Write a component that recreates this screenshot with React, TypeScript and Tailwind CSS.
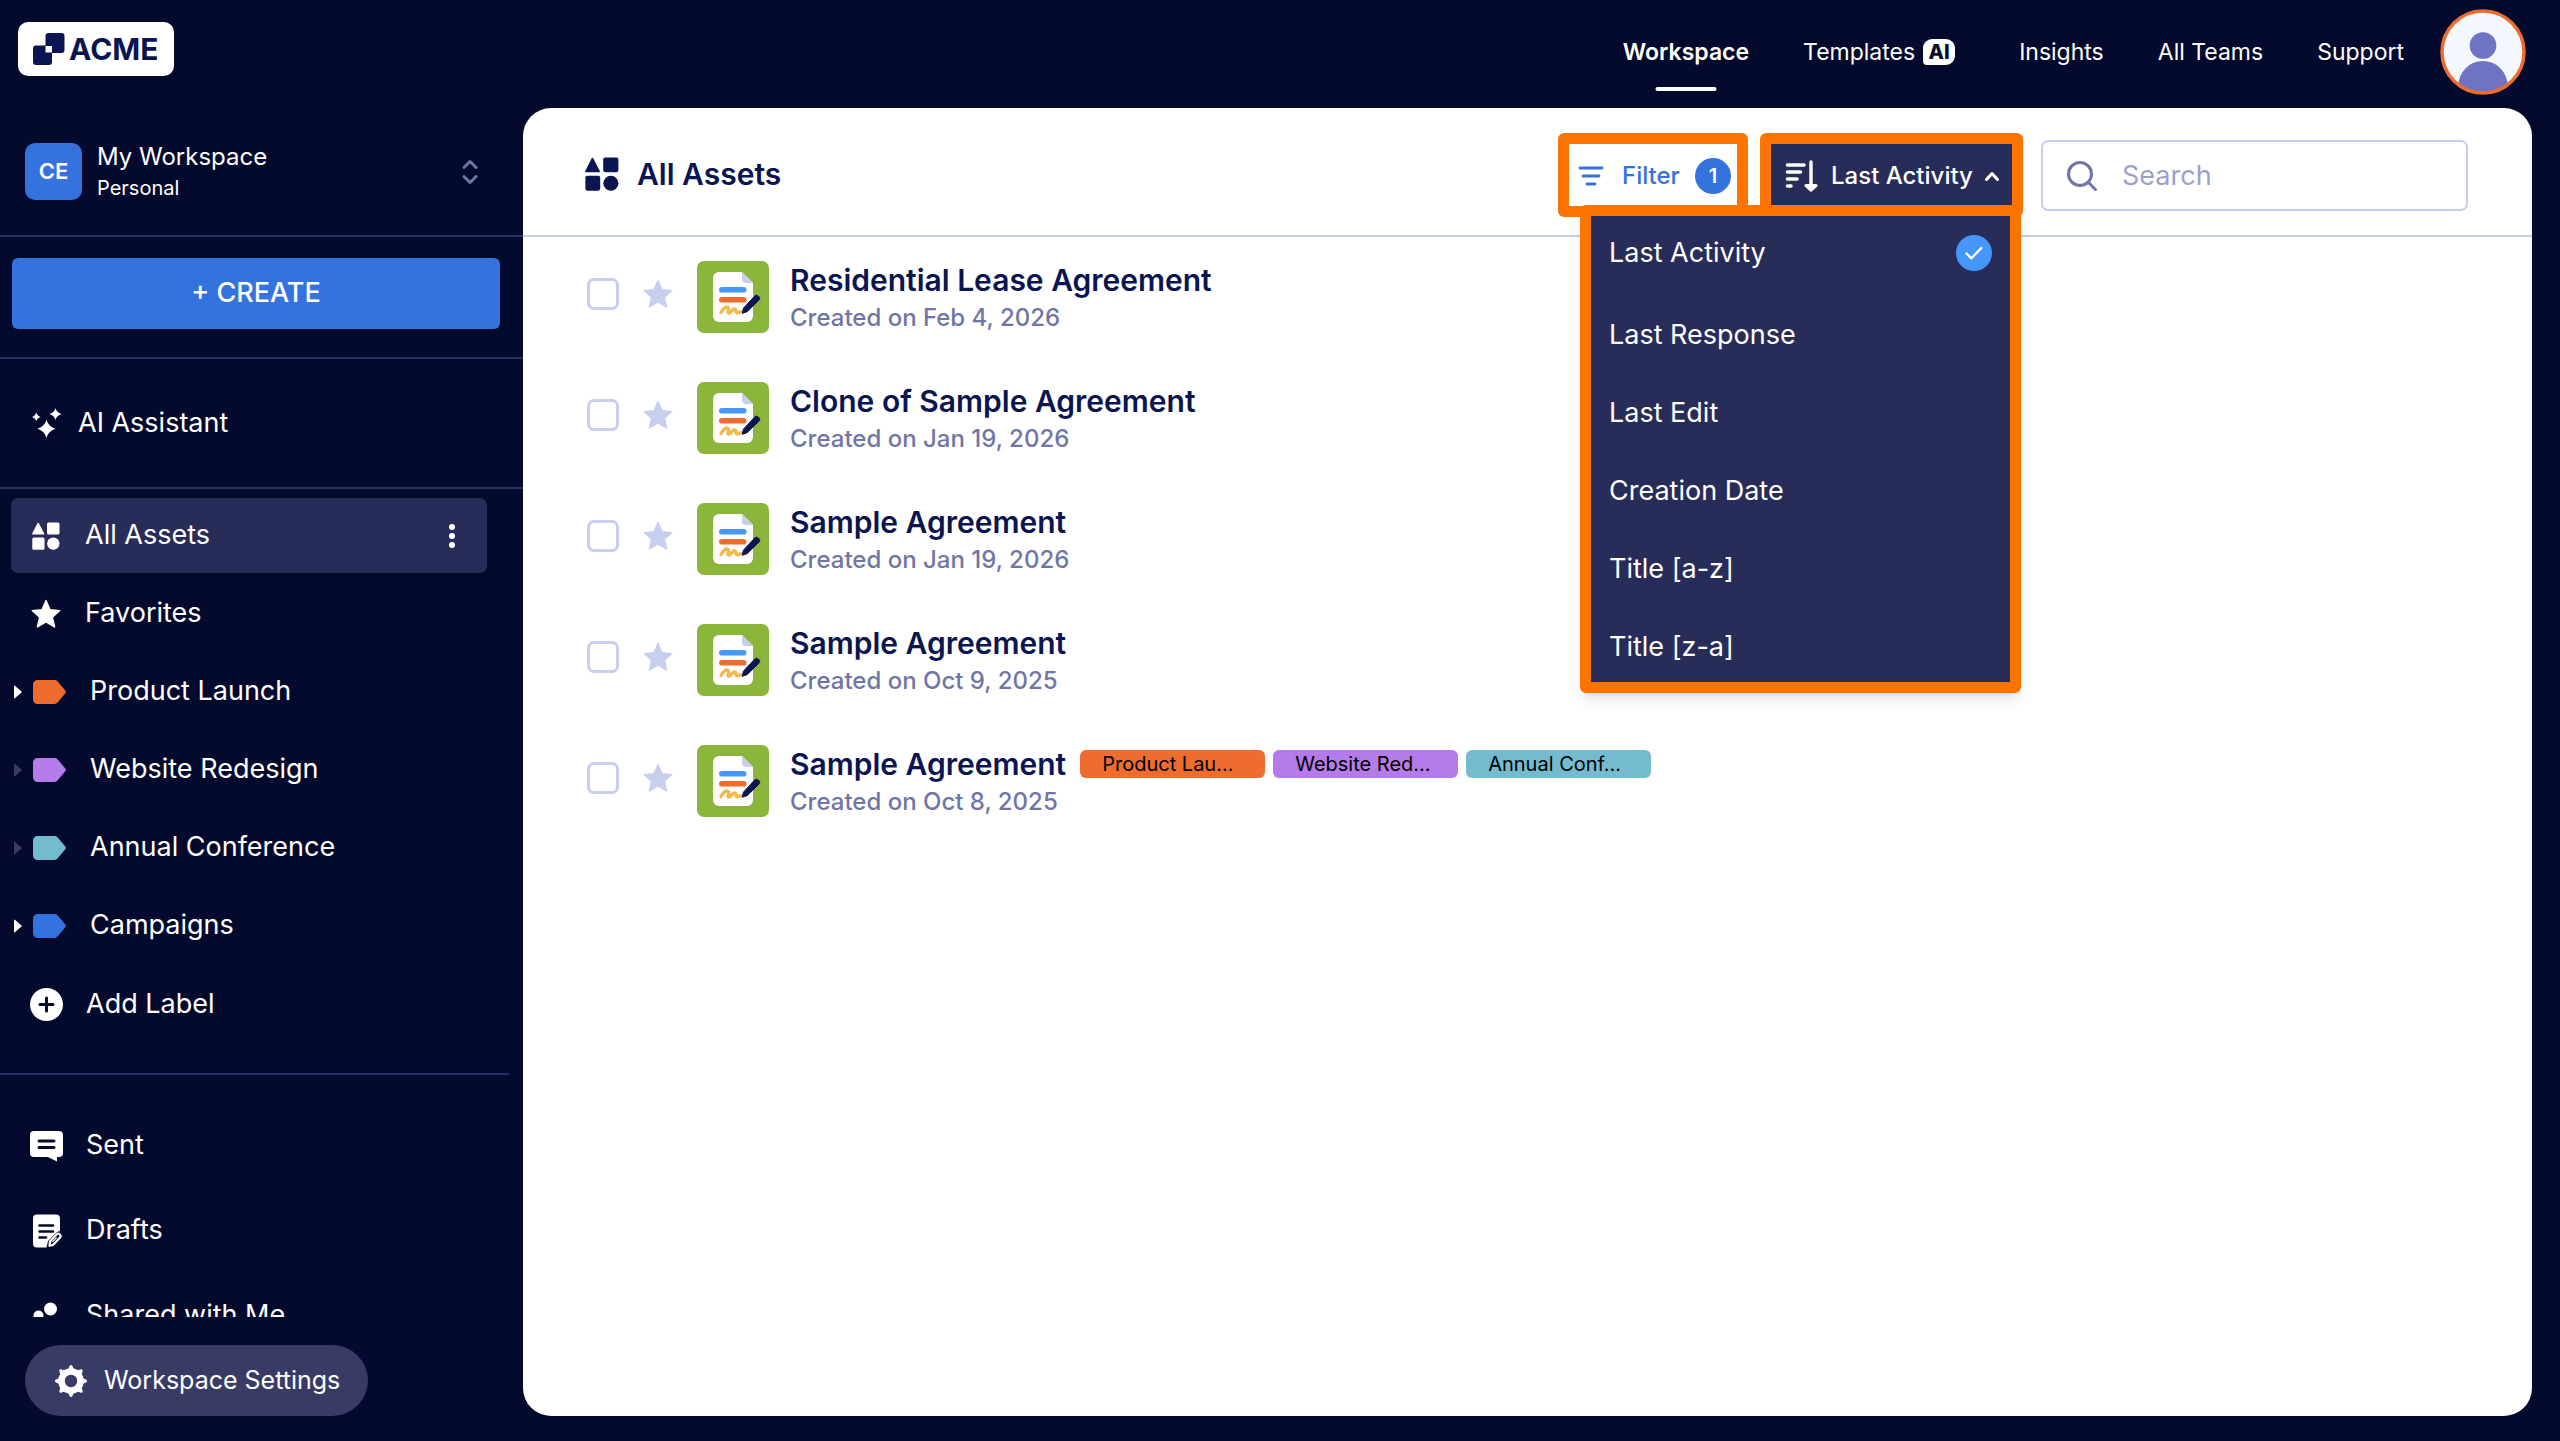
import React from 'react';
import clsx from 'clsx';

const labels = [
  { name: 'Product Launch', color: '#ee6d2e', expandable: true },
  { name: 'Website Redesign', color: '#b57beb', expandable: false },
  { name: 'Annual Conference', color: '#74bbcf', expandable: false },
  { name: 'Campaigns', color: '#3473dd', expandable: true },
];

const sortOptions = [
  'Last Activity',
  'Last Response',
  'Last Edit',
  'Creation Date',
  'Title [a-z]',
  'Title [z-a]',
];

const assets = [
  { title: 'Residential Lease Agreement', date: 'Created on Feb 4, 2026', tags: [] },
  { title: 'Clone of Sample Agreement', date: 'Created on Jan 19, 2026', tags: [] },
  { title: 'Sample Agreement', date: 'Created on Jan 19, 2026', tags: [] },
  { title: 'Sample Agreement', date: 'Created on Oct 9, 2025', tags: [] },
  {
    title: 'Sample Agreement',
    date: 'Created on Oct 8, 2025',
    tags: [
      { text: 'Product Lau...', bg: 'bg-[#ee6d2e]' },
      { text: 'Website Red...', bg: 'bg-[#b57beb]' },
      { text: 'Annual Conf...', bg: 'bg-[#74bbcf]' },
    ],
  },
];

/* Icons */

const ShapesIcon = ({ className }: { className?: string }) => (
  <svg viewBox="0 0 28 28" fill="currentColor" className={className} aria-hidden="true">
    <path d="M5.4 1.2a.8.8 0 0 1 1.5 0l5.3 10.3c.3.6-.1 1-.7 1H.9c-.7 0-1-.5-.7-1z" />
    <rect x="15" y="0.5" width="12.5" height="12" rx="1.5" />
    <rect x="0.3" y="15.5" width="12.2" height="12.2" rx="1.5" />
    <circle cx="21.3" cy="21.6" r="6.2" />
  </svg>
);

const StarIcon = ({ className }: { className?: string }) => (
  <svg viewBox="0 0 30 30" fill="currentColor" className={className} aria-hidden="true">
    <path
      d="M15 1.5l4 9.2 9.8.9-7.4 6.6 2.2 9.8-8.6-5-8.6 5 2.2-9.8-7.4-6.6 9.8-.9z"
      stroke="currentColor"
      strokeWidth="1.4"
      strokeLinejoin="round"
    />
  </svg>
);

const SparklesIcon = () => (
  <svg viewBox="0 0 30 30" fill="currentColor" className="h-[30px] w-[30px]" aria-hidden="true">
    <path d="M14.5 11.5c1.3 4.8 4 7.5 9 9.3c-5 1.8-7.7 4.5-9 9.3c-1.3-4.8-4-7.5-9-9.3c5-1.8 7.7-4.5 9-9.3z" />
    <path d="M23.5 0c.9 3.2 2.7 4.9 6 6c-3.3 1.1-5.1 2.8-6 6c-.9-3.2-2.7-4.9-6-6c3.3-1.1 5.1-2.8 6-6z" />
    <path d="M4.3 4.5c.7 2.4 2 3.6 4.3 4.4c-2.3.8-3.6 2-4.3 4.4c-.7-2.4-2-3.6-4.3-4.4c2.3-.8 3.6-2 4.3-4.4z" />
  </svg>
);

const LabelIcon = ({ color }: { color: string }) => (
  <svg viewBox="0 0 33 24" className="h-6 w-[33px]" fill={color} aria-hidden="true">
    <path d="M5 0h16.5c1.2 0 2.2.5 3 1.3l7.6 9c.9 1 .9 2.3 0 3.3l-7.6 9c-.8.9-1.8 1.4-3 1.4H5c-3 0-5-2-5-5V5c0-3 2-5 5-5z" />
  </svg>
);

const PlusCircleIcon = () => (
  <svg viewBox="0 0 33 33" className="h-[33px] w-[33px]" aria-hidden="true">
    <circle cx="16.5" cy="16.5" r="16.5" fill="#fff" />
    <path d="M16.5 10v13M10 16.5h13" stroke="#040a2d" strokeWidth="3" strokeLinecap="round" />
  </svg>
);

const SentIcon = () => (
  <svg viewBox="0 0 33 32" className="h-8 w-[33px]" aria-hidden="true">
    <path d="M4 1h25a4 4 0 0 1 4 4v18a4 4 0 0 1-4 4h-2v4.5L18 27H4a4 4 0 0 1-4-4V5a4 4 0 0 1 4-4z" fill="#fff" />
    <path d="M9 11h15M9 17.5h15" stroke="#040a2d" strokeWidth="3" strokeLinecap="round" />
  </svg>
);

const DraftIcon = () => (
  <svg viewBox="0 0 30 34" className="h-[34px] w-[30px]" aria-hidden="true">
    <path d="M4 .5h19a4 4 0 0 1 4 4V17l-3 1-9 9-1.5 6.500H4a4 4 0 0 1-4-4v-25a4 4 0 0 1 4-4z" fill="#fff" />
    <path d="M6.500 11.500H20M6.500 17.500H20M6.500 23.500H13" stroke="#040a2d" strokeWidth="2.6" strokeLinecap="round" />
    <path d="M17 27.500l6.500-7a2.300 2.300 0 0 1 3.300 3.300L20 31l-3.500.8z" fill="#040a2d" stroke="#fff" strokeWidth="2.200" strokeLinejoin="round" />
    <path d="M19.700 27.700l3.600-3.900" stroke="#fff" strokeWidth="1.200" strokeLinecap="round" />
  </svg>
);

const PeopleIcon = () => (
  <svg viewBox="0 0 33 32" className="h-8 w-[33px]" fill="#fff" aria-hidden="true">
    <circle cx="20.5" cy="9" r="6.5" />
    <circle cx="8.5" cy="15.5" r="5" />
    <path d="M9 31c0-8 4-13 11.5-13S32 23 32 31z" />
  </svg>
);

const GearIcon = () => (
  <svg viewBox="0 0 34 34" className="h-[34px] w-[34px]" aria-hidden="true">
    <g fill="#fff">
      <circle cx="17" cy="17" r="12.8" />
      {[0, 45, 90, 135, 180, 225, 270, 315].map((angle) => (
        <path key={angle} d="M12 6.5c2.5-1 3-3 3.5-4.5q1.5-2.2 3 0c.5 1.5 1 3.5 3.5 4.5z" transform={`rotate(${angle} 17 17)`} />
      ))}
    </g>
    <circle cx="17" cy="17" r="6.2" fill="#383b66" />
  </svg>
);

const SortIcon = () => (
  <svg viewBox="0 0 34 34" className="h-[34px] w-[34px]" fill="none" stroke="#fff" strokeLinecap="round" aria-hidden="true">
    <path d="M2.5 6h16.5M2.5 13h13M2.5 20h9.5M2.5 27h3.5" strokeWidth="3.6" />
    <path d="M26 3v24" strokeWidth="3.4" />
    <path d="M21 26.5h10L26 31z" fill="#fff" strokeWidth="3.2" strokeLinejoin="round" />
  </svg>
);

const FilterIcon = () => (
  <svg viewBox="0 0 26 22" className="h-[22px] w-[26px]" fill="none" stroke="currentColor" strokeWidth="2.8" strokeLinecap="round" aria-hidden="true">
    <path d="M2 3h22M5 11h16M9 19h8" />
  </svg>
);

const SearchIcon = () => (
  <svg viewBox="0 0 32 32" className="h-8 w-8 shrink-0" fill="none" stroke="#6f76a7" strokeWidth="3" strokeLinecap="round" aria-hidden="true">
    <circle cx="14" cy="14" r="11.5" />
    <path d="M22.5 22.5l7 7" />
  </svg>
);

const SignDocumentIcon = () => (
  <svg viewBox="0 0 72 72" className="h-[72px] w-[72px] shrink-0" aria-hidden="true">
    <rect width="72" height="72" rx="7" fill="#8bb63b" />
    <path d="M22 11h23l11 11v33a6 6 0 0 1-6 6H22a6 6 0 0 1-6-6V17a6 6 0 0 1 6-6z" fill="#fff" />
    <path d="M45 11l11 11h-7a4 4 0 0 1-4-4z" fill="#c8ceed" />
    <rect x="22" y="26" width="27.5" height="5.6" rx="2.8" fill="#4598fa" />
    <rect x="22" y="36" width="27.5" height="5.6" rx="2.8" fill="#ee6d2e" />
    <path d="M24 51.5c2-3.5 5-6.5 7-5s-1.5 6 1 5.5 4-5 6-4 0 4 2.5 3.8 2-1.6 5-.8" fill="none" stroke="#f5b94a" strokeWidth="3.4" strokeLinecap="round" strokeLinejoin="round" />
    <path d="M57.5 35.2q2-2 3.8-.2l.6.6q1.8 1.8 0 3.6L50 50.7l-4.6 1.5 1-5z" fill="#0a1551" stroke="#0a1551" strokeWidth="1" strokeLinejoin="round" />
  </svg>
);

const Avatar = () => (
  <svg viewBox="0 0 86 86" className="h-[86px] w-[86px]" aria-hidden="true">
    <clipPath id="avatar-clip">
      <circle cx="43" cy="43" r="40" />
    </clipPath>
    <circle cx="43" cy="43" r="41" fill="#f5f7ff" />
    <g clipPath="url(#avatar-clip)" fill="#6f73c4">
      <circle cx="43" cy="36.5" r="13.3" />
      <circle cx="43" cy="76.5" r="24.5" />
    </g>
    <circle cx="43" cy="43" r="41" fill="none" stroke="#ee6d2e" strokeWidth="3.5" />
  </svg>
);

/* Layout pieces */

const TopBar = () => (
  <header className="flex h-[108px] shrink-0 items-start justify-between pr-[34px] pl-[18px]">
    <a href="#" className="mt-[22px] flex h-[54px] items-center gap-1 rounded-[10px] bg-white px-[15px] text-[#0a1551]">
      <svg viewBox="0 0 32 32" className="h-8 w-8" aria-hidden="true">
        <rect x="12.5" width="19" height="20" rx="3" fill="#0a1551" />
        <rect y="12.5" width="19" height="19.5" rx="3" fill="#0a1551" />
        <rect x="12.5" y="13" width="6.5" height="6.5" fill="#fff" />
      </svg>
      <span className="text-[30px] leading-none font-bold">ACME</span>
    </a>

    <nav className="flex h-[104px] items-center gap-[54px] text-[23px]">
      <a href="#" className="relative font-semibold">
        Workspace
        <span className="absolute -bottom-[22px] left-1/2 h-1 w-[61px] -translate-x-1/2 rounded-full bg-white" />
      </a>
      <a href="#" className="flex items-center gap-2 pr-[10px]">
        Templates
        <span className="flex h-[26px] w-8 items-center justify-center rounded-[9px] rounded-bl-[4px] bg-white text-xl leading-none font-extrabold text-[#040a2d]">
          AI
        </span>
      </a>
      <a href="#">Insights</a>
      <a href="#">All Teams</a>
      <a href="#">Support</a>
      <button type="button" aria-label="Account" className="-ml-[18px]">
        <Avatar />
      </button>
    </nav>
  </header>
);

const Sidebar = () => (
  <aside className="flex w-[523px] shrink-0 flex-col">
    <button type="button" className="flex h-[129px] shrink-0 items-center border-b-2 border-[#2b2f60] pr-[45px] pl-[25px] text-left">
      <span className="flex h-[57px] w-[57px] items-center justify-center rounded-[10px] bg-[#3473dd] text-[22px] font-semibold">CE</span>
      <span className="ml-[15px] flex-1">
        <span className="block text-2xl leading-8">My Workspace</span>
        <span className="block text-xl leading-[30px]">Personal</span>
      </span>
      <svg viewBox="0 0 16 26" className="h-[26px] w-4" fill="none" stroke="#6f76a7" strokeWidth="3" strokeLinecap="round" strokeLinejoin="round" aria-hidden="true">
        <path d="M2 8.5l6-6 6 6M2 17.5l6 6 6-6" />
      </svg>
    </button>

    <div className="shrink-0 border-b-2 border-[#2b2f60] pt-[21px] pr-[23px] pb-7 pl-3">
      <button type="button" className="h-[71px] w-full rounded-md bg-[#3473dd] text-[27px] font-medium">
        + CREATE
      </button>
    </div>

    <a href="#" className="flex h-[130px] shrink-0 items-center gap-4 border-b-2 border-[#2b2f60] pl-8 text-[27px]">
      <SparklesIcon />
      AI Assistant
    </a>

    <div className="min-h-0 flex-1 overflow-hidden text-[27px]">
      <ul className="mr-[14px] flex flex-col gap-[3px] border-b-2 border-[#2b2f60] pt-[9px] pb-[30px]">
        <li className="mr-[22px] ml-[11px] flex h-[75px] items-center rounded-[7px] bg-[#282c59] pr-8 pl-[21px]">
          <a href="#" className="flex flex-1 items-center gap-[25px]">
            <ShapesIcon className="h-7 w-7" />
            All Assets
          </a>
          <button type="button" aria-label="More" className="flex flex-col gap-[3px]">
            <span className="h-[6px] w-[6px] rounded-full bg-white" />
            <span className="h-[6px] w-[6px] rounded-full bg-white" />
            <span className="h-[6px] w-[6px] rounded-full bg-white" />
          </button>
        </li>
        <li>
          <a href="#" className="flex h-[75px] items-center gap-6 pl-[31px]">
            <StarIcon className="h-[30px] w-[30px]" />
            Favorites
          </a>
        </li>
        {labels.map((label) => (
          <li key={label.name}>
            <a href="#" className="flex h-[75px] items-center pl-[14px]">
              <svg viewBox="0 0 8 14" className={clsx('mr-[11px] h-[14px] w-2', label.expandable ? 'text-white' : 'text-[#383b66]')} fill="currentColor" aria-hidden="true">
                <path d="M0 1.5Q0 0 1.2 1L7.5 6.5Q8 7 7.5 7.5L1.2 13Q0 14 0 12.5z" />
              </svg>
              <LabelIcon color={label.color} />
              <span className="ml-6">{label.name}</span>
            </a>
          </li>
        ))}
        <li>
          <button type="button" className="flex h-[77px] items-center gap-[23px] pl-[30px]">
            <PlusCircleIcon />
            Add Label
          </button>
        </li>
      </ul>

      <ul className="pt-7">
        <li>
          <a href="#" className="flex h-[85px] items-center gap-[23px] pl-[30px]">
            <SentIcon />
            Sent
          </a>
        </li>
        <li>
          <a href="#" className="flex h-[85px] items-center gap-[23px] pl-[33px]">
            <DraftIcon />
            Drafts
          </a>
        </li>
        <li>
          <a href="#" className="flex h-[85px] items-center gap-[23px] pl-[30px]">
            <PeopleIcon />
            Shared with Me
          </a>
        </li>
      </ul>
    </div>

    <div className="shrink-0 pt-7 pb-[25px] pl-[25px]">
      <button type="button" className="flex h-[71px] items-center gap-4 rounded-full bg-[#383b66] pr-7 pl-[29px] text-[25px]">
        <GearIcon />
        Workspace Settings
      </button>
    </div>
  </aside>
);

const SortMenu = () => (
  <div className="relative ml-3">
    <button type="button" aria-haspopup="listbox" aria-expanded="true" className="flex h-[84px] w-[263px] items-center rounded-md border-[11px] border-[#ff7300] bg-[#282c59] pt-0.5 pl-[14px] text-2xl font-medium text-white">
      <SortIcon />
      <span className="ml-3 flex-1 text-left whitespace-nowrap">Last Activity</span>
      <svg viewBox="0 0 16 12" className="mr-3 h-3 w-4" fill="none" stroke="#fff" strokeWidth="3" strokeLinecap="round" strokeLinejoin="round" aria-hidden="true">
        <path d="M2.5 9.5L8 3.5l5.5 6" />
      </svg>
    </button>

    <ul role="listbox" aria-label="Sort by" className="absolute top-[72px] right-[2px] z-10 h-[488px] w-[441px] overflow-hidden rounded-md border-[11px] border-[#ff7300] bg-[#282c59] text-[27px] text-white shadow-lg">
      {sortOptions.map((option, idx) => (
        <li key={option} role="option" aria-selected={idx === 0} className="first:mb-1 first:-mt-0.5">
          <button type="button" className="flex h-[78px] w-full items-center justify-between pr-[18px] pl-[18px]">
            {option}
            {idx === 0 && (
              <svg viewBox="0 0 36 36" className="h-9 w-9" aria-hidden="true">
                <circle cx="18" cy="18" r="18" fill="#4598fa" />
                <path d="M10.5 18.5l4.8 4.8 10-10.3" fill="none" stroke="#fff" strokeWidth="2.4" strokeLinecap="round" strokeLinejoin="round" />
              </svg>
            )}
          </button>
        </li>
      ))}
    </ul>
  </div>
);

const Toolbar = () => (
  <div className="flex h-[129px] items-start border-b-2 border-[#c8ceed] pr-16 pl-[62px]">
    <div className="flex flex-1 items-center gap-[18px] pt-[46px]">
      <ShapesIcon className="h-[34px] w-[34px]" />
      <h1 className="text-[30px] leading-10 font-semibold">All Assets</h1>
    </div>

    <div className="flex pt-[25px]">
      <button type="button" className="flex h-[84px] w-[190px] items-center rounded-md border-[11px] border-[#ff7300] pt-0.5 pl-[9px] text-2xl font-medium text-[#3473dd]">
        <FilterIcon />
        <span className="ml-[18px] flex-1 text-left">Filter</span>
        <span className="mr-[6px] flex h-9 w-9 items-center justify-center rounded-full bg-[#3473dd] text-xl font-semibold text-white">1</span>
      </button>
      <SortMenu />
      <label className="mt-[7px] ml-[18px] flex h-[71px] w-[427px] items-center gap-6 rounded-[7px] border-2 border-[#c8ceed] px-[23px]">
        <SearchIcon />
        <input type="search" placeholder="Search" aria-label="Search" className="w-full min-w-0 pt-0.5 text-[27px] outline-none placeholder:text-[#9ba1c9]" />
      </label>
    </div>
  </div>
);

const AssetList = () => (
  <ul className="pt-6 pl-16">
    {assets.map((asset, idx) => (
      <li key={idx} className="mb-[49px] flex h-[72px] items-center">
        <input type="checkbox" aria-label={asset.title} className="mb-1.5 h-8 w-8 appearance-none rounded-[7px] border-[3px] border-[#c8ceed]" />
        <button type="button" aria-label="Favorite" className="mb-1.5 ml-6 text-[#c8ceed]">
          <StarIcon className="h-[30px] w-[30px]" />
        </button>
        <div className="ml-6">
          <SignDocumentIcon />
        </div>
        <div className="ml-[21px]">
          <div className="flex h-10 items-center">
            <a href="#" className="mr-[14px] text-[30px] leading-10 font-semibold">{asset.title}</a>
            <div className="flex gap-2">
              {asset.tags.map((tag) => (
                <span key={tag.text} className={clsx('h-7 w-[185px] rounded-md pl-[22px] text-xl leading-7 text-black', tag.bg)}>
                  {tag.text}
                </span>
              ))}
            </div>
          </div>
          <p className="mt-0.5 text-2xl leading-8 font-medium text-[#6f76a7]">{asset.date}</p>
        </div>
      </li>
    ))}
  </ul>
);

const App: React.FC = () => {
  return (
    <div className="flex h-screen flex-col overflow-hidden bg-[#040a2d] font-['Inter',sans-serif] text-white">
      <TopBar />
      <div className="flex min-h-0 flex-1">
        <Sidebar />
        <main className="mr-7 mb-[25px] flex-1 rounded-[28px] bg-white text-[#0a1551]">
          <Toolbar />
          <AssetList />
        </main>
      </div>
    </div>
  );
};

export default App;
